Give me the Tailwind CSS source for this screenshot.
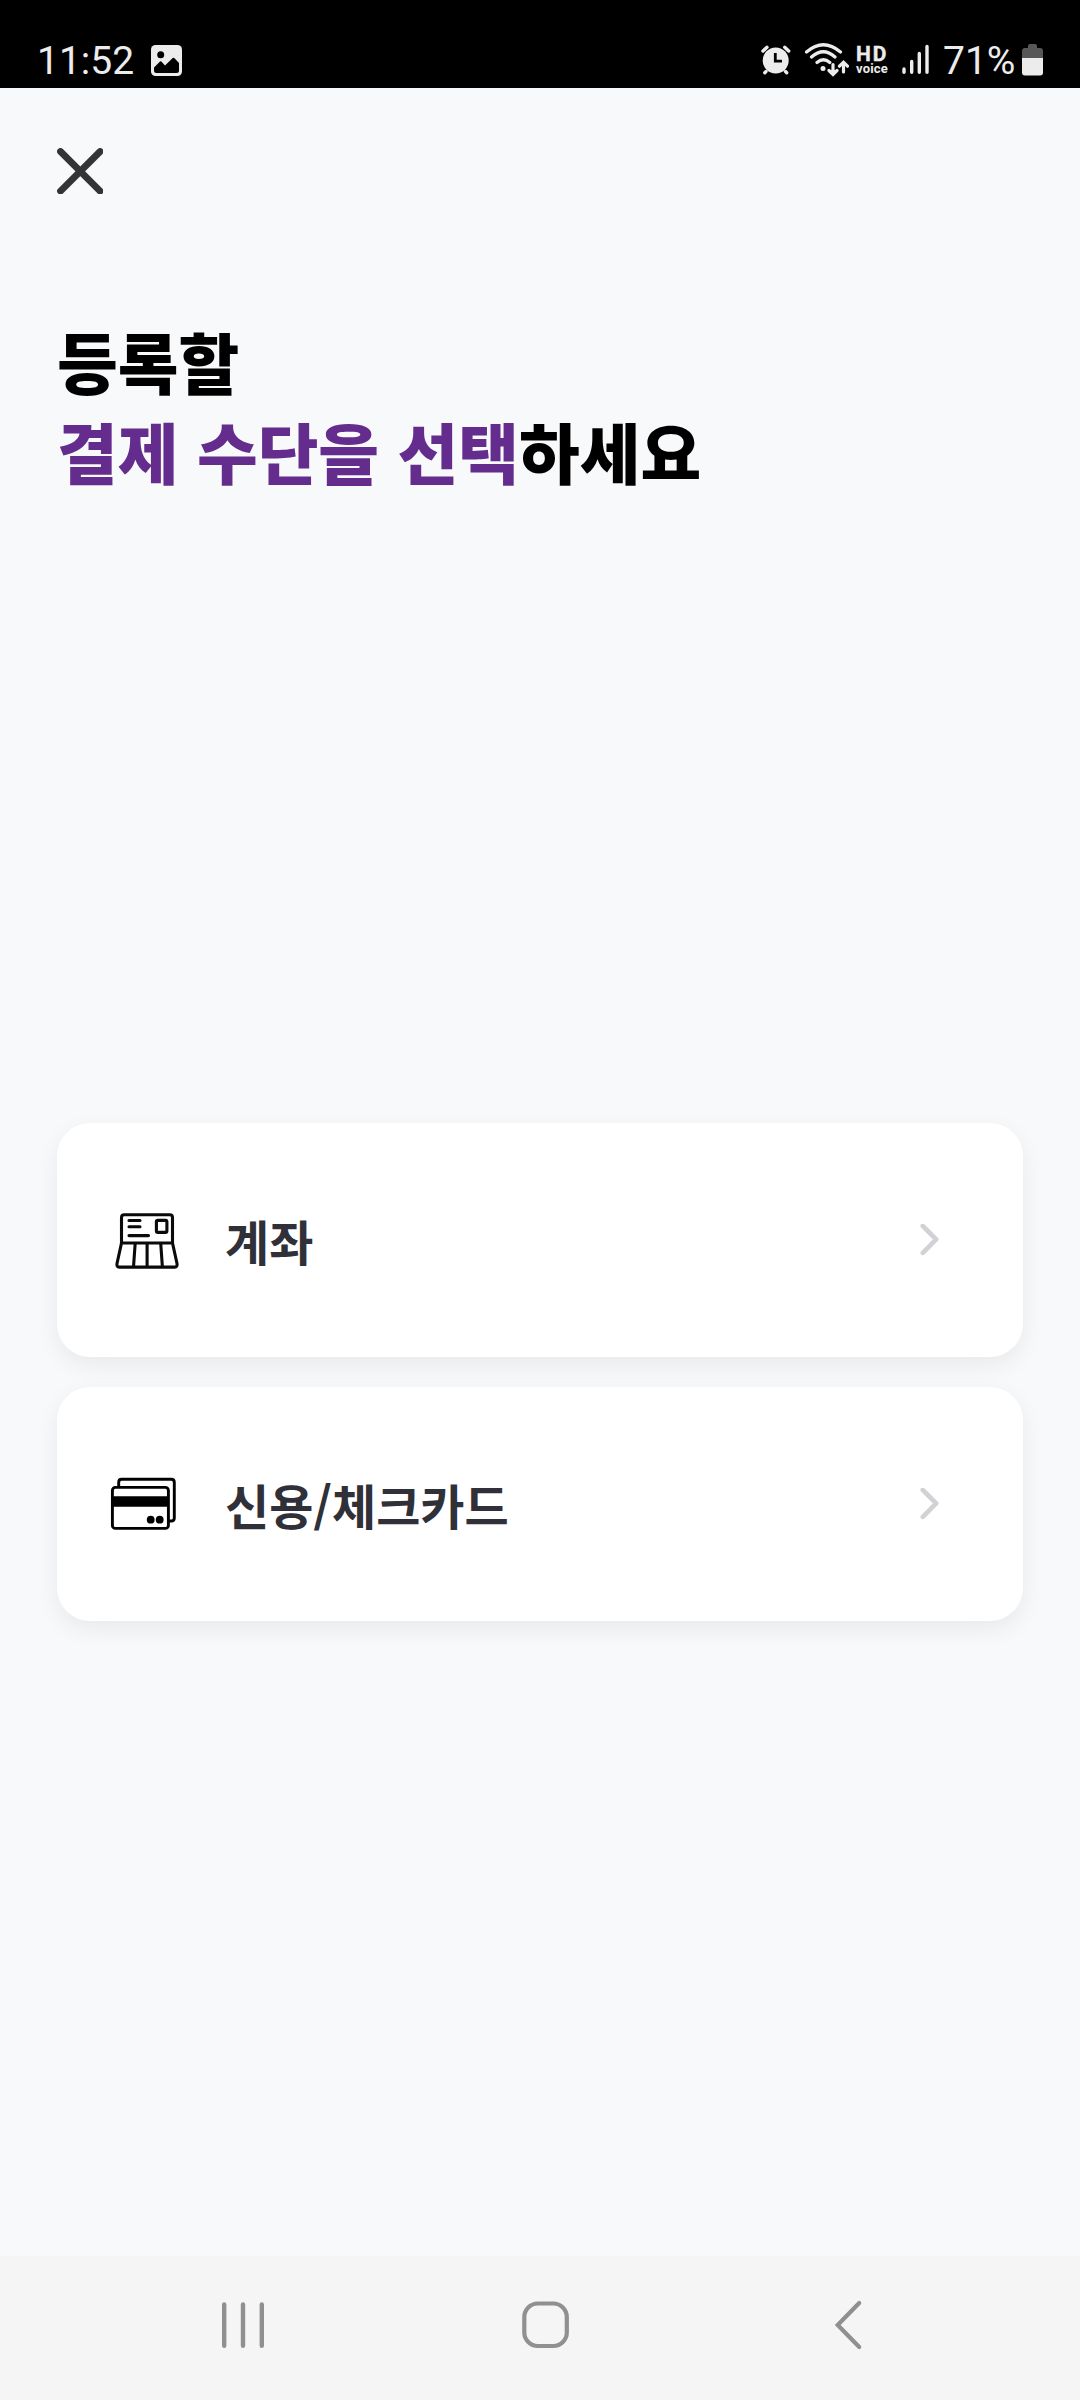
<!DOCTYPE html>
<html lang="ko">
<head>
<meta charset="utf-8">
<title>결제 수단 선택</title>
<script src="https://cdn.jsdelivr.net/npm/@tailwindcss/browser@4"></script>
</head>
<body class="w-[1080px] h-[2400px] flex flex-col bg-[#f8f9fb] overflow-hidden font-['Noto_Sans_CJK_KR',sans-serif]">
<!-- status bar -->
<header class="h-[88px] shrink-0 bg-black pt-8 pl-[37px] pr-[36px] flex justify-between text-[#ececec] font-[Roboto,sans-serif] text-[39px] leading-[56px]">
  <div class="flex items-center">
    <span class="w-[114px] pt-0.5">11:52</span>
    <svg class="w-8 h-8" viewBox="151 44 32 32"><rect x="151" y="45" width="31" height="31" rx="4.5" fill="#ececec"/><circle cx="160.700" cy="54.700" r="3.500"/><path d="M154 67.500l6-6q.7-.6 1.400 0l3.600 4 7.700-7.400q.8-.7 1.600 0l4.700 4.900v7.500q0 2.500-2.500 2.500h-20q-2.500 0-2.500-2.500z"/></svg>
  </div>
  <div class="flex items-center">
    <svg class="w-[30px] h-8" viewBox="761 44 30 32"><g stroke="#ececec" fill="none" stroke-linecap="round"><circle cx="775.700" cy="60.500" r="13" fill="#ececec" stroke="none"/><path stroke-width="3.400" d="M763 51l4-3.700M784.700 47.300l4 3.700M766 71.500l-1.200 1.200M785.500 71.500l1.200 1.200"/><path stroke="#000" stroke-width="2.800" stroke-linecap="butt" d="M775.300 53v8.200h6.700"/></g></svg>
    <svg class="w-11 h-9 ml-3.5" viewBox="805 42 44 36"><g stroke="#ececec" fill="none" stroke-width="3.200" stroke-linecap="round"><path d="M806.500 52q16.800-14.500 34 0M811.500 57q11.800-10.500 23.500 0M817 62.500q6.500-5.500 12.800 0"/><circle cx="823" cy="68.600" r="2.500" fill="#ececec" stroke="none"/><path d="M833 64.500v9M829 70.500l4 4 4-4M843.500 72V62.500M839.500 66.200l4-4 4 4"/></g></svg>
    <div class="ml-[7px] w-[35px] flex flex-col items-start gap-px font-bold">
      <span class="h-[15px] text-[21px] leading-[15px] tracking-[2px] [-webkit-text-stroke:0.4px_#ececec]">HD</span>
      <span class="h-[11px] text-[13px] leading-[11px] tracking-[0.200px]">voice</span>
    </div>
    <svg class="w-7 h-8 ml-[11px]" viewBox="902 44 28 32"><g stroke="#ececec" stroke-width="3.400" stroke-linecap="round"><path d="M904 69v3.200M911.700 61.500v10.700M919.300 53.500v18.700M927 46.500v25.700"/></g></svg>
    <span class="ml-[13px] w-[79px] pt-0.5">71%</span>
    <svg class="w-[22px] h-8" viewBox="1022 44 22 32"><path fill="#575757" d="M1022 59V51q0-3 3-3h3v-2q0-2 2-2h5q2 0 2 2v2h3q3 0 3 3v8z"/><path fill="#ececec" d="M1022 58h21v14.500q0 3-3 3h-15q-3 0-3-3z"/></svg>
  </div>
</header>

<main class="flex-1 flex flex-col px-[57px] pt-[60px]">
  <button class="w-[46px] h-[46px]"><svg class="w-[46px] h-[46px]" viewBox="0 0 46 46"><path d="M3.500 3.500l39.600 39.600M43.100 3.500L3.500 43.100" stroke="#343434" stroke-width="6.800" stroke-linecap="round"/></svg></button>
  <h1 class="mt-[121px] h-[180px] text-[66px] leading-[90px] font-black text-black whitespace-nowrap">등록할<br><span class="text-[#642c8c]">결제 수단을 선택</span>하세요</h1>
  <div class="mt-[628px] flex flex-col gap-[30px]">
    <button class="h-[234px] rounded-[33px] bg-white shadow-[0_8px_24px_rgba(0,0,0,0.065)] flex items-center pl-[51px] pr-[83px]">
      <svg class="w-[74px] h-[74px]" viewBox="108 1203 74 74"><g fill="none" stroke="#0a0a0a" stroke-width="3.100" stroke-linejoin="round" stroke-linecap="round"><path d="M121.500 1243v-25.500q0-2.700 2.700-2.700h45.600q2.700 0 2.700 2.700V1243M121.500 1243l-4.500 20.500q-.7 3.600 2.300 3.600h55.400q3 0 2.300-3.600l-4.500-20.500zM135.200 1243l-1.700 24M147.100 1243v24M160.700 1243l1.700 24"/><path d="M129 1220.500h11M129 1226.700h11M129 1235.600h19.500"/><rect x="156.400" y="1220.400" width="10.500" height="12" rx="1.500"/></g></svg>
      <span class="ml-[43px] pb-px text-[48px] leading-[70px] font-bold text-[#2f3038]">계좌</span>
      <svg class="ml-auto w-5 h-8" viewBox="920.500 1224 20 32"><path d="M923.300 1226l13.400 13.400-13.400 13.400" fill="none" stroke="#d1d2d6" stroke-width="4.700" stroke-linecap="round" stroke-linejoin="round"/></svg>
    </button>
    <button class="h-[234px] rounded-[33px] bg-white shadow-[0_8px_24px_rgba(0,0,0,0.065)] flex items-center pl-[51px] pr-[83px]">
      <svg class="w-[74px] h-[74px]" viewBox="108 1467 74 74"><g fill="none" stroke="#000" stroke-width="2.900"><path d="M118.700 1487v-4.700q0-3 3-3h49.600q3 0 3 3v35.700q0 3-3 3h-2.300"/><rect x="112.400" y="1487.400" width="56" height="41" rx="3"/><path fill="#000" stroke="none" d="M112 1496.300h57v10.500h-57z"/><g fill="#000" stroke="none"><circle cx="150.700" cy="1519.700" r="3.900"/><circle cx="159.700" cy="1519.700" r="3.900"/></g></g></svg>
      <span class="ml-[43px] pb-px text-[48px] leading-[70px] font-bold text-[#2f3038]">신용/체크카드</span>
      <svg class="ml-auto w-5 h-8" viewBox="920.500 1224 20 32"><path d="M923.300 1226l13.400 13.400-13.400 13.400" fill="none" stroke="#d1d2d6" stroke-width="4.700" stroke-linecap="round" stroke-linejoin="round"/></svg>
    </button>
  </div>
</main>

<!-- system navigation -->
<nav class="h-36 shrink-0 bg-[#f5f5f5] flex items-center justify-between pl-[218px] pr-[207px] pb-[6px]">
  <svg class="w-[50px] h-[50px]" viewBox="218 2300 50 50"><path d="M224.200 2304.500v41.200M243 2304.500v41.200M261.800 2304.500v41.200" stroke="#909090" stroke-width="4.400" stroke-linecap="round"/></svg>
  <svg class="w-[50px] h-[50px]" viewBox="520.500 2300 50 50"><rect x="523.800" y="2303.500" width="42.500" height="42.500" rx="13.500" fill="none" stroke="#909090" stroke-width="4.200"/></svg>
  <svg class="w-[50px] h-[50px]" viewBox="823 2300 50 50"><path d="M859.200 2303l-21.500 22 21.500 22" fill="none" stroke="#909090" stroke-width="4.200" stroke-linecap="round"/></svg>
</nav>
</body>
</html>
